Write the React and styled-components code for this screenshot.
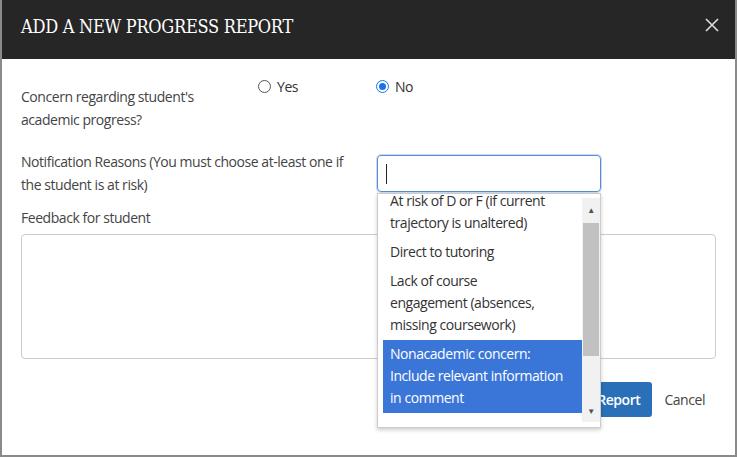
import styled, { createGlobalStyle } from 'styled-components'

const Global = createGlobalStyle`
  html, body { margin: 0; background: #8a8a8a; }
  body { font-family: "Open Sans", "Liberation Sans", sans-serif; color: #333; letter-spacing: -0.45px; }
`

const Modal = styled.div`
  margin: 0 2px;
  width: 733px;
  height: 455px;
  background: white;
  display: flex;
  flex-direction: column;
`

const Header = styled.div`
  background: #262626;
  color: white;
  height: 59px;
  display: flex;
  align-items: center;
  justify-content: space-between;
  padding: 0 16px 0 19px;
  box-sizing: border-box;
`

const Title = styled.div`
  font-family: "DejaVu Serif", "Liberation Serif", serif;
  font-size: 18px;
  letter-spacing: -0.3px;
  transform: scaleX(0.9);
  transform-origin: left;
  margin-top: -6px;
`

const Close = styled.svg`
  width: 14px;
  height: 14px;
  margin-top: -10px;
`

const Body = styled.div`
  padding: 18px 19px 0 19px;
  flex: 1;
  display: flex;
  flex-direction: column;
  font-size: 14px;
  line-height: 23px;
`

const Row = styled.div`
  display: flex;
  margin-bottom: ${p => p.mb}px;
`

const Label = styled.div`
  width: ${p => p.w || 237}px;
  flex: none;
  color: #444;
  margin-top: ${p => p.mt || 0}px;
`

const Radio = styled.label`
  display: flex;
  align-items: center;
  gap: 6px;
  width: 118px;
  height: 23px;
  margin-top: -2px;
`

const Circle = styled.span`
  width: 11px;
  height: 11px;
  border-radius: 50%;
  border: 1px solid ${p => p.on ? '#1a73e8' : '#555'};
  display: flex;
  align-items: center;
  justify-content: center;
  &::after {
    content: '';
    width: 7px;
    height: 7px;
    border-radius: 50%;
    background: ${p => p.on ? '#1a73e8' : 'transparent'};
  }
`

const SelectWrap = styled.div`
  position: relative;
  width: 224px;
  margin-left: 19px;
  margin-top: 3px;
`

const Input = styled.div`
  height: 37px;
  border: 1px solid #5b8bd6;
  border-radius: 4px;
  box-shadow: 0 0 0 1px #c9daf3;
  box-sizing: border-box;
  display: flex;
  align-items: center;
  padding-left: 8px;
  &::before { content: ''; width: 1px; height: 20px; background: #222; }
`

const Dropdown = styled.div`
  position: absolute;
  top: 38px;
  left: 0;
  width: 224px;
  height: 235px;
  background: white;
  border: 1px solid #ccc;
  box-shadow: 0 2px 4px rgba(0,0,0,0.2);
  box-sizing: border-box;
  display: flex;
  padding: 4px 0 5px 5px;
  overflow: hidden;
  z-index: 10;
`

const Options = styled.div`
  flex: 1;
  margin-top: -11px;
`

const Option = styled.div`
  padding: 3px 7px 4px 7px;
  font-size: 14px;
  line-height: 22px;
  color: ${p => p.sel ? 'white' : '#333'};
  background: ${p => p.sel ? '#3a76d8' : 'transparent'};
`

const Scroll = styled.div`
  width: 18px;
  background: #f1f1f1;
  display: flex;
  flex-direction: column;
  align-items: center;
  font-size: 8px;
  color: #505050;
`

const Thumb = styled.div`
  width: 16px;
  height: 133px;
  background: #c1c1c1;
  margin: 2px 0 auto;
`

const Textarea = styled.div`
  height: 123px;
  border: 1px solid #ccc;
  border-radius: 4px;
  margin-top: 5px;
`

const Footer = styled.div`
  display: flex;
  justify-content: flex-end;
  align-items: center;
  gap: 12px;
  margin-top: 23px;
  margin-right: 11px;
`

const Primary = styled.div`
  background: #2a70b8;
  color: white;
  font-weight: 600;
  border-radius: 3px;
  padding: 6px 12px;
  width: 96px;
  text-align: right;
`

const Cancel = styled.div`
  color: #444;
`

export default function App() {
  return (
    <>
      <Global />
      <Modal>
        <Header>
          <Title>ADD A NEW PROGRESS REPORT</Title>
          <Close viewBox="0 0 14 14">
            <path d="M1 1L13 13M13 1L1 13" stroke="#ddd" strokeWidth="1.6" />
          </Close>
        </Header>
        <Body>
          <Row mb={21}>
            <Label mt={8}>Concern regarding student's<br />academic progress?</Label>
            <Radio><Circle />Yes</Radio>
            <Radio><Circle on />No</Radio>
          </Row>
          <Row mb={10}>
            <Label w={337} mt={-2}>Notification Reasons (You must choose at-least one if the student is at risk)</Label>
            <SelectWrap>
              <Input />
              <Dropdown>
                <Options>
                  <Option>At risk of D or F (if current trajectory is unaltered)</Option>
                  <Option>Direct to tutoring</Option>
                  <Option>Lack of course<br />engagement (absences, missing coursework)</Option>
                  <Option sel>Nonacademic concern: Include relevant information in comment</Option>
                </Options>
                <Scroll>
                  <span>▲</span>
                  <Thumb />
                  <span>▼</span>
                </Scroll>
              </Dropdown>
            </SelectWrap>
          </Row>
          <Label>Feedback for student</Label>
          <Textarea />
          <Footer>
            <Primary>Add Report</Primary>
            <Cancel>Cancel</Cancel>
          </Footer>
        </Body>
      </Modal>
    </>
  )
}
